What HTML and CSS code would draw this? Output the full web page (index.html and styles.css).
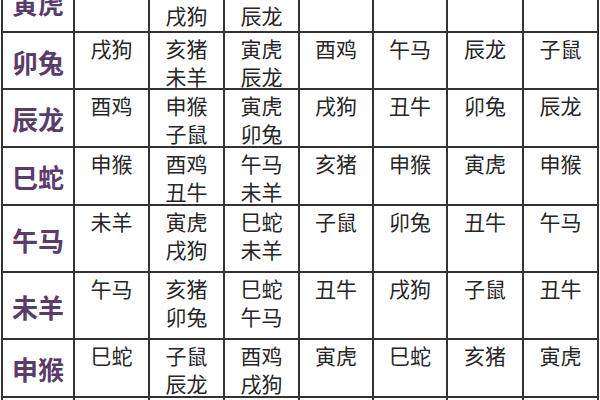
FILE: index.html
```html
<!DOCTYPE html>
<html lang="zh">
<head>
<meta charset="utf-8">
<link rel="stylesheet" href="styles.css">
</head>
<body>
<div class="page">
  <div class="grid">
    <div class="label">寅虎</div><div class="cell"><span>亥猪</span></div><div class="cell"><span>午马</span><span>戌狗</span></div><div class="cell"><span>卯兔</span><span>辰龙</span></div><div class="cell"><span>申猴</span></div><div class="cell"><span>巳蛇</span></div><div class="cell"><span>巳蛇</span></div><div class="cell"><span>巳蛇</span></div>
    <div class="label">卯兔</div><div class="cell"><span>戌狗</span></div><div class="cell"><span>亥猪</span><span>未羊</span></div><div class="cell"><span>寅虎</span><span>辰龙</span></div><div class="cell"><span>酉鸡</span></div><div class="cell"><span>午马</span></div><div class="cell"><span>辰龙</span></div><div class="cell"><span>子鼠</span></div>
    <div class="label">辰龙</div><div class="cell"><span>酉鸡</span></div><div class="cell"><span>申猴</span><span>子鼠</span></div><div class="cell"><span>寅虎</span><span>卯兔</span></div><div class="cell"><span>戌狗</span></div><div class="cell"><span>丑牛</span></div><div class="cell"><span>卯兔</span></div><div class="cell"><span>辰龙</span></div>
    <div class="label">巳蛇</div><div class="cell"><span>申猴</span></div><div class="cell"><span>酉鸡</span><span>丑牛</span></div><div class="cell"><span>午马</span><span>未羊</span></div><div class="cell"><span>亥猪</span></div><div class="cell"><span>申猴</span></div><div class="cell"><span>寅虎</span></div><div class="cell"><span>申猴</span></div>
    <div class="label">午马</div><div class="cell"><span>未羊</span></div><div class="cell"><span>寅虎</span><span>戌狗</span></div><div class="cell"><span>巳蛇</span><span>未羊</span></div><div class="cell"><span>子鼠</span></div><div class="cell"><span>卯兔</span></div><div class="cell"><span>丑牛</span></div><div class="cell"><span>午马</span></div>
    <div class="label">未羊</div><div class="cell"><span>午马</span></div><div class="cell"><span>亥猪</span><span>卯兔</span></div><div class="cell"><span>巳蛇</span><span>午马</span></div><div class="cell"><span>丑牛</span></div><div class="cell"><span>戌狗</span></div><div class="cell"><span>子鼠</span></div><div class="cell"><span>丑牛</span></div>
    <div class="label">申猴</div><div class="cell"><span>巳蛇</span></div><div class="cell"><span>子鼠</span><span>辰龙</span></div><div class="cell"><span>酉鸡</span><span>戌狗</span></div><div class="cell"><span>寅虎</span></div><div class="cell"><span>巳蛇</span></div><div class="cell"><span>亥猪</span></div><div class="cell"><span>寅虎</span></div>
    <div class="label">酉鸡</div><div class="cell"><span>辰龙</span></div><div class="cell"><span>巳蛇</span><span>丑牛</span></div><div class="cell"><span>申猴</span><span>戌狗</span></div><div class="cell"><span>卯兔</span></div><div class="cell"><span>午马</span></div><div class="cell"><span>戌狗</span></div><div class="cell"><span>卯兔</span></div>
  </div>
</div>
</body>
</html>
```

FILE: styles.css
```css
html, body {
  margin: 0;
  padding: 0;
  background: #ffffff;
}

.page {
  width: 600px;
  height: 400px;
  overflow: hidden;
  background: #ffffff;
}

.grid {
  display: grid;
  grid-template-columns: 70px 73px 73px 73px 72px 72px 74px 73px;
  grid-template-rows: 59px 55px 56px 56px 65px 65px 56px 56px;
  gap: 2px;
  padding: 2px;
  background: #333333;
  width: max-content;
  margin-top: -30px;
  margin-left: 1px;
}

.cell {
  background: #ffffff;
  font-family: "Noto Sans CJK SC", "Noto Sans", sans-serif;
  font-size: 21px;
  color: #262626;
  text-align: center;
  padding-top: 1px;
  box-sizing: border-box;
  overflow: hidden;
}

.cell span {
  display: block;
  height: 28px;
  line-height: 28px;
  overflow: visible;
}

.label {
  background: #ffffff;
  font-family: "Noto Sans CJK SC", "Noto Sans", sans-serif;
  font-size: 26px;
  font-weight: 700;
  color: #583c6c;
  display: flex;
  align-items: center;
  justify-content: center;
  padding-top: 1px;
  box-sizing: border-box;
}
```
